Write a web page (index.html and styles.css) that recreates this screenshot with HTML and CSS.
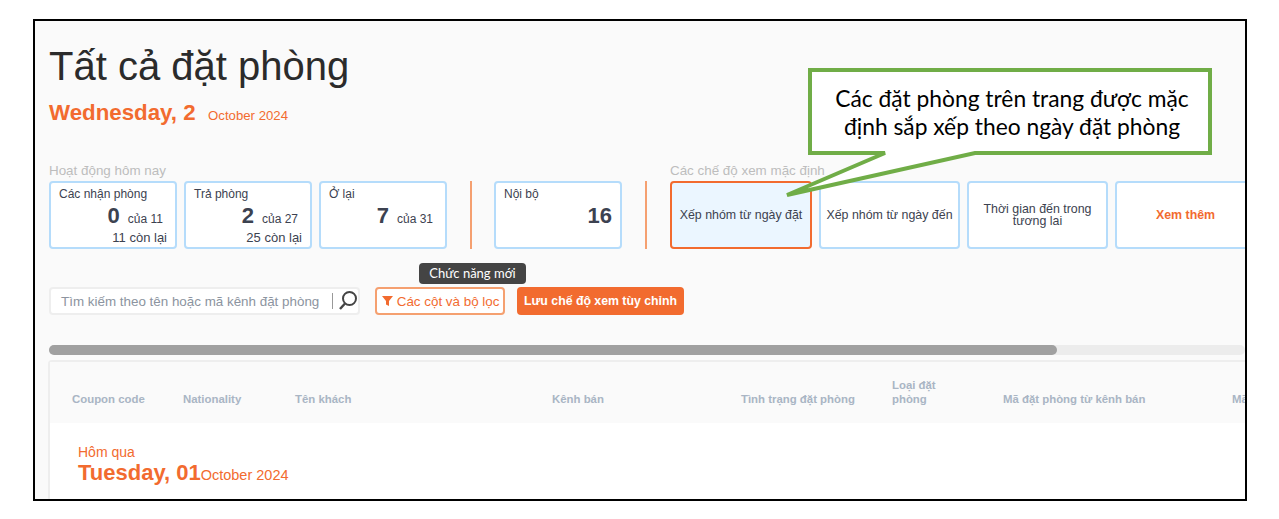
FILE: index.html
```html
<!DOCTYPE html>
<html lang="vi">
<head>
    <meta charset="UTF-8">
    <title>Tất cả đặt phòng</title>
    <link rel="stylesheet" href="styles.css">
</head>
<body>
    <div class="frame">
        <h1 class="page-title">Tất cả đặt phòng</h1>
        <div class="today">
            <span class="today-day">Wednesday, 2</span>
            <span class="today-month">October 2024</span>
        </div>

        <!-- thẻ thống kê -->
        <div class="stats">
            <div class="stats-group">
                <div class="group-label">Hoạt động hôm nay</div>
                <div class="cards">
                    <div class="card">
                        <div class="card-title">Các nhận phòng</div>
                        <div class="card-main"><b>0</b><span>của 11</span></div>
                        <div class="card-left">11 còn lại</div>
                    </div>
                    <div class="card">
                        <div class="card-title">Trả phòng</div>
                        <div class="card-main"><b>2</b><span>của 27</span></div>
                        <div class="card-left">25 còn lại</div>
                    </div>
                    <div class="card">
                        <div class="card-title">Ở lại</div>
                        <div class="card-main"><b>7</b><span>của 31</span></div>
                    </div>
                    <div class="divider"></div>
                    <div class="card">
                        <div class="card-title">Nội bộ</div>
                        <div class="card-main card-only"><b>16</b></div>
                    </div>
                    <div class="divider"></div>
                </div>
            </div>
            <div class="stats-group">
                <div class="group-label">Các chế độ xem mặc định</div>
                <div class="cards">
                    <div class="view active">Xếp nhóm từ ngày đặt</div>
                    <div class="view">Xếp nhóm từ ngày đến</div>
                    <div class="view">Thời gian đến trong tương lai</div>
                    <div class="view more">Xem thêm</div>
                </div>
            </div>
        </div>

        <!-- tìm kiếm -->
        <div class="toolbar">
            <div class="search">
                <span class="search-text">Tìm kiếm theo tên hoặc mã kênh đặt phòng</span>
                <span class="search-sep"></span>
                <svg class="search-icon" width="20" height="22" viewBox="0 0 20 22" fill="none" stroke="#444" stroke-width="2">
                    <circle cx="11.500" cy="8.500" r="6.500"/>
                    <path d="M7 13.500 2 19" stroke-width="2.400"/>
                </svg>
            </div>
            <div class="filter-wrap">
                <div class="tip">Chức năng mới</div>
                <button class="btn-filter">
                    <svg width="11" height="11" viewBox="0 0 11 11"><path d="M0 1h11L7 6v5L4 9.500V6z" fill="#f26b2f"/></svg>
                    Các cột và bộ lọc
                </button>
            </div>
            <button class="btn-save">Lưu chế độ xem tùy chỉnh</button>
        </div>

        <div class="scrollbar"><div class="scroll-thumb"></div></div>

        <!-- bảng đặt phòng -->
        <div class="table">
            <div class="table-head">
                <div>Coupon code</div>
                <div>Nationality</div>
                <div>Tên khách</div>
                <div>Kênh bán</div>
                <div>Tình trạng đặt phòng</div>
                <div class="narrow">Loại đặt phòng</div>
                <div>Mã đặt phòng từ kênh bán</div>
                <div>Mã</div>
            </div>
            <div class="table-group">
                <div class="group-when">Hôm qua</div>
                <div class="group-date"><b>Tuesday, 01</b><span>October 2024</span></div>
            </div>
        </div>

        <!-- chú thích -->
        <svg class="callout-shape" width="430" height="135" viewBox="0 0 430 135">
            <polygon points="25,2 425,2 425,85 190,85 2,127 100,85 25,85" fill="#fff" stroke="#70ad47" stroke-width="4"/>
        </svg>
        <div class="callout-text">Các đặt phòng trên trang được mặc<br>định sắp xếp theo ngày đặt phòng</div>
    </div>
</body>
</html>
```

FILE: styles.css
```css
html, body {
    margin: 0;
    padding: 0;
    background: #fff;
}

body {
    padding: 19px 0 0 33px;
    font-family: "Liberation Sans", Arial, sans-serif;
}

.frame {
    position: relative;
    box-sizing: border-box;
    width: 1214px;
    height: 482px;
    padding: 0 0 0 14px;
    border: 2px solid #000;
    background: #fafafa;
    overflow: hidden;
}

.page-title {
    margin: 21px 0 0;
    font-size: 40px;
    line-height: 48px;
    font-weight: normal;
    color: #2b2b2b;
}

.today {
    margin-top: 10px;
    height: 26px;
    color: #f26b2f;
}

.today-day {
    font-size: 22.300px;
    font-weight: bold;
}

.today-month {
    margin-left: 8px;
    font-size: 13.200px;
}

/* thẻ thống kê */
.stats {
    display: flex;
    gap: 8px;
    margin-top: 36px;
    height: 87px;
}

.group-label {
    height: 17px;
    margin-bottom: 2px;
    font-size: 13.400px;
    line-height: 17px;
    color: #bdbdbd;
    white-space: nowrap;
}

.cards {
    display: flex;
    gap: 7px;
}

.card, .view {
    box-sizing: border-box;
    height: 68px;
    border: 2px solid #b5dcfb;
    border-radius: 4px;
    background: #fff;
    color: #3c4250;
}

.card {
    width: 128px;
    padding: 3px 8px;
    font-size: 12px;
}

.card-title {
    line-height: 16px;
}

.card-main {
    display: flex;
    justify-content: flex-end;
    align-items: baseline;
    gap: 8px;
    margin-top: 2px;
    padding-right: 4px;
    line-height: 24px;
}

.card-main b {
    font-size: 22px;
}

.card-main.card-only {
    padding-right: 0;
}

.card-left {
    text-align: right;
    font-size: 13px;
    line-height: 13px;
}

.divider {
    width: 2px;
    height: 68px;
    margin: 0 15px 0 16px;
    background: #f5a070;
}

.view {
    display: flex;
    align-items: center;
    justify-content: center;
    width: 141px;
    padding: 0 4px;
    font-size: 12.400px;
    line-height: 12px;
    text-align: center;
}

.view.active {
    width: 142px;
    border-color: #f26b2f;
    background: #ebf6ff;
}

.view.more {
    flex-shrink: 0;
    color: #f26b2f;
    font-weight: bold;
}

/* tìm kiếm */
.toolbar {
    display: flex;
    align-items: center;
    margin-top: 38px;
    height: 28px;
}

.search {
    box-sizing: border-box;
    display: flex;
    align-items: center;
    width: 311px;
    height: 28px;
    padding-left: 10px;
    border: 2px solid #eeeeee;
    border-radius: 4px;
    background: #fff;
}

.search-text {
    flex: 1;
    font-size: 13.400px;
    color: #8c94a0;
    white-space: nowrap;
}

.search-sep {
    width: 1px;
    height: 16px;
    margin-right: 5px;
    background: #999;
}

.search-icon {
    flex-shrink: 0;
}

.filter-wrap {
    position: relative;
    margin-left: 15px;
}

.tip {
    position: absolute;
    left: 44px;
    top: -24px;
    width: 107px;
    height: 21px;
    border-radius: 4px;
    background: #444;
    color: #fff;
    font-family: Lato, sans-serif;
    font-size: 13px;
    line-height: 21px;
    text-align: center;
    white-space: nowrap;
}

.btn-filter, .btn-save {
    box-sizing: border-box;
    height: 28px;
    border-radius: 4px;
    font-family: inherit;
    white-space: nowrap;
}

.btn-filter {
    width: 130px;
    padding: 0 5px;
    border: 2px solid #f5a070;
    background: #fff;
    color: #f26b2f;
    font-size: 13.400px;
}

.btn-save {
    width: 167px;
    margin-left: 12px;
    padding: 0;
    border: none;
    background: #f26b2f;
    color: #fff;
    font-size: 12.300px;
    font-weight: bold;
}

/* thanh cuộn */
.scrollbar {
    margin-top: 30px;
    height: 10px;
    border-radius: 5px;
    background: #ececec;
}

.scroll-thumb {
    width: 1008px;
    height: 10px;
    border-radius: 5px;
    background: #a0a0a0;
}

/* bảng */
.table {
    box-sizing: border-box;
    margin: 5px 0 0 -1px;
    height: 150px;
    border: 2px solid #eeeeee;
    border-right: none;
    border-bottom: none;
    border-radius: 4px 0 0 0;
    background: #fff;
}

.table-head {
    display: grid;
    grid-template-columns: 111px 112px 257px 189px 151px 111px 229px 100px;
    align-items: end;
    box-sizing: border-box;
    height: 61px;
    padding: 0 0 17px 22px;
    background: #fafafa;
    color: #a9b5c4;
    font-size: 11.400px;
    font-weight: bold;
    line-height: 14px;
    white-space: nowrap;
}

.table-head .narrow {
    white-space: normal;
    width: 60px;
}

.table-group {
    padding: 22px 0 0 28px;
    color: #f26b2f;
}

.group-when {
    font-size: 14px;
    line-height: 15px;
}

.group-date {
    line-height: 26px;
}

.group-date b {
    font-size: 22px;
}

.group-date span {
    font-size: 14.500px;
}

/* chú thích */
.callout-shape {
    position: absolute;
    left: 750px;
    top: 47px;
}

.callout-text {
    position: absolute;
    left: 779px;
    top: 63px;
    width: 396px;
    font-family: Lato, sans-serif;
    font-size: 22.800px;
    line-height: 28px;
    text-align: center;
    color: #000;
    white-space: nowrap;
}
```
